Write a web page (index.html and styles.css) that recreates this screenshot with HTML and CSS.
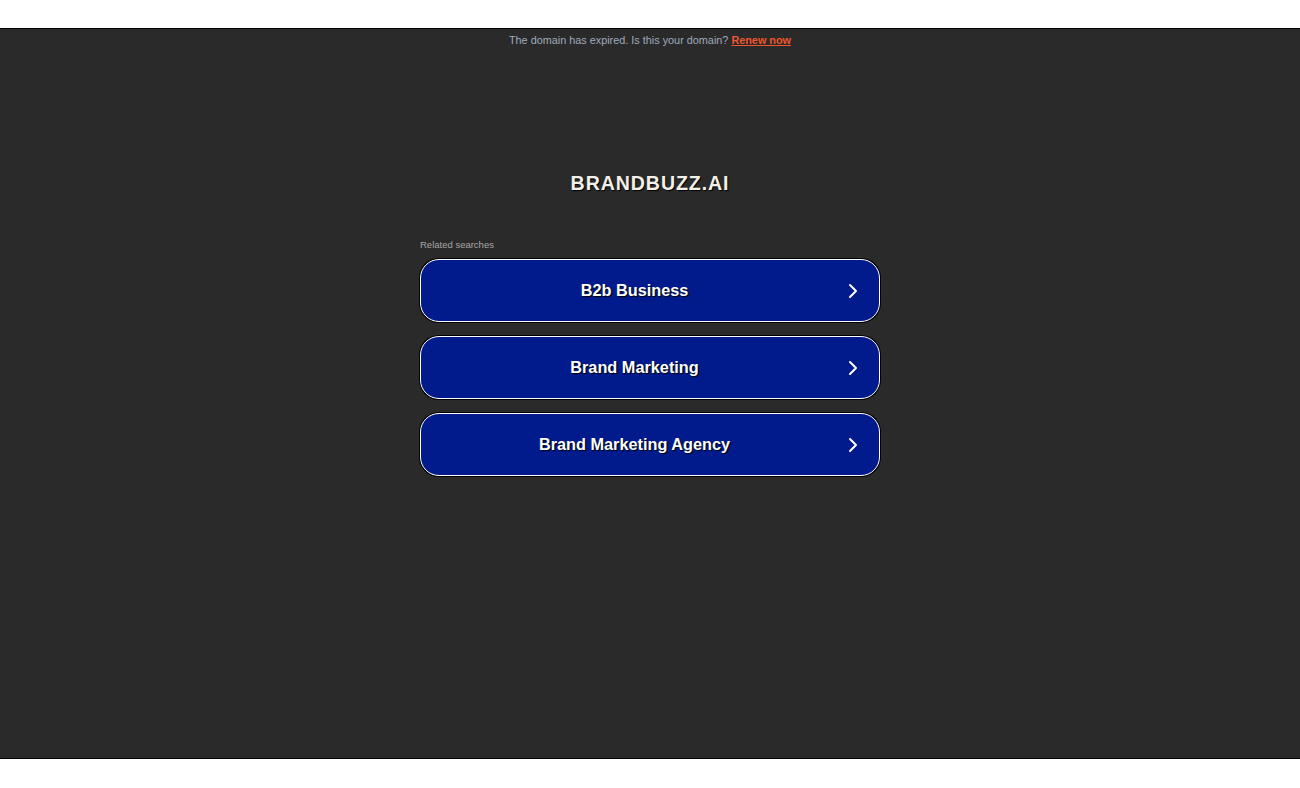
FILE: index.html
```html
<!DOCTYPE html>
<html lang="en">

<head>
    <meta charset="UTF-8">
    <title>brandbuzz.ai</title>
    <link rel="stylesheet" href="styles.css">
</head>

<body>
    <div class="topbar"></div>

    <div class="frame">
        <p class="notice">
            The domain has expired. Is this your domain?
            <a href="#">Renew now</a>
        </p>

        <h1 class="domain">BRANDBUZZ.AI</h1>

        <div class="related">
            <span class="related-title">Related searches</span>

            <a class="search-link" href="#">
                <span class="label">B2b Business</span>
                <svg class="chevron" viewBox="0 0 10 16" width="10" height="16">
                    <path d="M2 2 L8 8 L2 14" fill="none" stroke="#fff" stroke-width="2" stroke-linecap="round" stroke-linejoin="round" />
                </svg>
            </a>

            <a class="search-link" href="#">
                <span class="label">Brand Marketing</span>
                <svg class="chevron" viewBox="0 0 10 16" width="10" height="16">
                    <path d="M2 2 L8 8 L2 14" fill="none" stroke="#fff" stroke-width="2" stroke-linecap="round" stroke-linejoin="round" />
                </svg>
            </a>

            <a class="search-link" href="#">
                <span class="label">Brand Marketing Agency</span>
                <svg class="chevron" viewBox="0 0 10 16" width="10" height="16">
                    <path d="M2 2 L8 8 L2 14" fill="none" stroke="#fff" stroke-width="2" stroke-linecap="round" stroke-linejoin="round" />
                </svg>
            </a>
        </div>
    </div>
</body>

</html>
```

FILE: styles.css
```css
body {
    margin: 0;
    background: #fff;
    font-family: "Liberation Sans", Arial, sans-serif;
}

.topbar {
    height: 28px;
}

.frame {
    height: 729px;
    background: #2a2a2a;
    border-top: 1px solid #000;
    border-bottom: 1px solid #000;
    display: flex;
    flex-direction: column;
    align-items: center;
}

.notice {
    margin: 4px 0 0;
    font-size: 10.85px;
    line-height: 14px;
    color: #9eaabd;
}

.notice a {
    color: #f0562c;
    font-weight: bold;
}

.domain {
    margin: 124px 0 0;
    font-size: 19.6px;
    line-height: 24px;
    letter-spacing: 0.9px;
    color: #f2f0e8;
    text-shadow: 1px 1px 1px #000;
}

.related {
    width: 460px;
    margin-top: 44px;
    display: flex;
    flex-direction: column;
    gap: 14px;
}

.related-title {
    font-size: 9.5px;
    line-height: 12px;
    color: #a6a6a6;
    margin-bottom: -6px;
}

.search-link {
    height: 61px;
    display: flex;
    align-items: center;
    background: #021b8c;
    border: 1.5px solid #fff;
    border-radius: 19px;
    box-shadow: 0 0 0 1px #000;
    text-decoration: none;
}

.search-link .label {
    flex: 1;
    text-align: center;
    font-size: 16.3px;
    font-weight: bold;
    color: #fff;
    text-shadow: 1px 1px 1px #000;
}

.search-link .chevron {
    margin-right: 21px;
}
```
